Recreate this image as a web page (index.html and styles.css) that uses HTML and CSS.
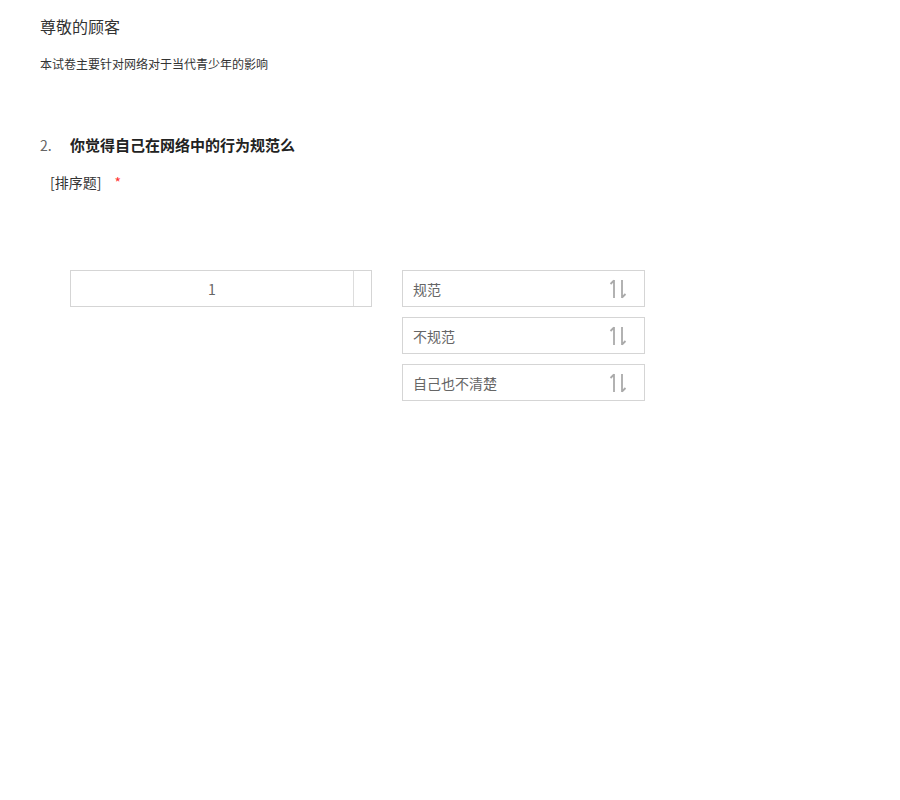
FILE: index.html
```html
<!DOCTYPE html>
<html lang="zh-CN">
<head>
<meta charset="UTF-8">
<meta name="viewport" content="width=device-width, initial-scale=1.0">
<title>问卷</title>
<link rel="stylesheet" href="styles.css">
</head>
<body>

<div class="survey">
    <div class="survey-head">
        <h1>尊敬的顾客</h1>
        <p class="desc">本试卷主要针对网络对于当代青少年的影响</p>
    </div>

    <div class="question">
        <div class="q-title">
            <span class="q-num">2.</span>
            <span class="q-text">你觉得自己在网络中的行为规范么</span>
        </div>
        <div class="q-type">[排序题] <span class="required">*</span></div>

        <div class="sort-area">
            <div class="sort-target">
                <div class="slot">1</div>
                <div class="slot-side"></div>
            </div>
            <ul class="sort-options">
                <li>
                    <span>规范</span>
                    <svg class="sort-icon" width="20" height="22" viewBox="0 0 20 22"><path d="M6 2 V20 M6 2.5 L2.5 6 M14 2 V20 M14 19.5 L17.5 16" fill="none" stroke="#aaa" stroke-width="1.8"/></svg>
                </li>
                <li>
                    <span>不规范</span>
                    <svg class="sort-icon" width="20" height="22" viewBox="0 0 20 22"><path d="M6 2 V20 M6 2.5 L2.5 6 M14 2 V20 M14 19.5 L17.5 16" fill="none" stroke="#aaa" stroke-width="1.8"/></svg>
                </li>
                <li>
                    <span>自己也不清楚</span>
                    <svg class="sort-icon" width="20" height="22" viewBox="0 0 20 22"><path d="M6 2 V20 M6 2.5 L2.5 6 M14 2 V20 M14 19.5 L17.5 16" fill="none" stroke="#aaa" stroke-width="1.8"/></svg>
                </li>
            </ul>
        </div>
    </div>
</div>

</body>
</html>
```

FILE: styles.css
```css
* {
    box-sizing: border-box;
}
body {
    margin: 0;
    background: #fff;
    font-family: "Microsoft YaHei", "Noto Sans CJK SC", sans-serif;
    color: #333;
}
.survey {
    padding: 14px 40px;
}
.survey-head h1 {
    margin: 0;
    font-size: 16px;
    font-weight: normal;
    color: #333;
    line-height: 24px;
}
.survey-head .desc {
    margin: 18px 0 0;
    font-size: 12px;
    line-height: 16px;
    color: #333;
}
.question {
    margin-top: 62px;
}
.q-title {
    display: flex;
    align-items: baseline;
    line-height: 22px;
}
.q-num {
    width: 30px;
    font-size: 14px;
    color: #666;
}
.q-text {
    font-size: 15px;
    font-weight: bold;
    color: #222;
}
.q-type {
    margin: 17px 0 0 10px;
    font-size: 14px;
    color: #333;
    line-height: 18px;
}
.required {
    margin-left: 10px;
    color: #f33;
}
.sort-area {
    display: flex;
    align-items: flex-start;
    gap: 30px;
    margin: 79px 0 0 30px;
}
.sort-target {
    display: flex;
    width: 302px;
    height: 37px;
    border: 1px solid #d5d5d5;
}
.slot {
    flex: 1;
    display: flex;
    align-items: center;
    justify-content: center;
    font-size: 14px;
    color: #666;
    border-right: 1px solid #ddd;
}
.slot-side {
    width: 17px;
}
.sort-options {
    list-style: none;
    margin: 0;
    padding: 0;
    display: flex;
    flex-direction: column;
    gap: 10px;
}
.sort-options li {
    display: flex;
    align-items: center;
    justify-content: space-between;
    width: 243px;
    height: 37px;
    padding: 0 16px 0 10px;
    border: 1px solid #d5d5d5;
    font-size: 14px;
    color: #666;
}
.sort-icon {
    display: block;
}
```
